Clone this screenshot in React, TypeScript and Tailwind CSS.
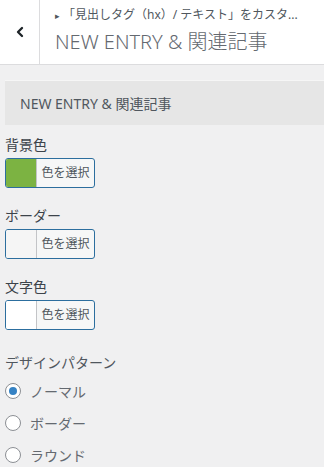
import { ChevronLeft } from 'lucide-react';

const font = { fontFamily: '"Noto Sans", "Noto Sans CJK JP", sans-serif' };

function ColorPicker({ label, swatch }: { label: string; swatch: string }) {
  return (
    <div className="flex flex-col">
      <div className="h-5 text-[14px] leading-5 text-[#3c434a]">{label}</div>
      <button
        type="button"
        className="mt-[3px] flex h-[30px] w-[90px] overflow-hidden rounded-[3px] border border-[#2c6e9e] bg-[#f6f7f7]"
      >
        <span className={`h-full w-[31px] border-r border-[#c3c4c7] ${swatch}`} />
        <span className="flex flex-1 items-center justify-center text-[12px] text-[#50575e]">色を選択</span>
      </button>
    </div>
  );
}

function Radio({ label, checked }: { label: string; checked?: boolean }) {
  return (
    <label className="flex h-[32px] items-center gap-[9px]">
      <span className="flex h-4 w-4 items-center justify-center rounded-full border border-[#8c8f94] bg-white">
        {checked && <span className="h-2 w-2 rounded-full bg-[#3582c4]" />}
      </span>
      <span className="text-[14px] text-[#646970]">{label}</span>
    </label>
  );
}

export default function App() {
  return (
    <div className="h-[467px] w-[324px] overflow-hidden bg-[#f0f0f1]" style={font}>
      <div className="flex h-[65px] border-b border-[#dcdcde] bg-white">
        <div className="flex w-10 items-center justify-center border-r border-[#dcdcde]">
          <ChevronLeft size={16} strokeWidth={3.5} className="text-[#1d2327]" />
        </div>
        <div className="flex min-w-0 flex-1 flex-col pl-[15px] pr-1 pt-[5px]">
          <div className="whitespace-nowrap text-[12px] leading-5 text-[#50575e]">
            <span className="mr-[3px] text-[9px] align-middle">▸</span>「見出しタグ（hx）/ テキスト」をカスタ...
          </div>
          <div className="mt-[2px] truncate text-[20px] font-light leading-7 text-[#646970]">NEW ENTRY &amp; 関連記事</div>
        </div>
      </div>

      <div className="pl-[5px] pt-[15px]">
        <div className="flex h-[45px] items-center border-t border-[#f6f6f6] bg-[#e6e6e6] pl-[15px] text-[14px] text-[#50575e]">
          NEW ENTRY &amp; 関連記事
        </div>

        <div className="mt-[10px] flex flex-col gap-[18px]">
          <ColorPicker label="背景色" swatch="bg-[#7cb342]" />
          <ColorPicker label="ボーダー" swatch="bg-[#f5f5f5]" />
          <ColorPicker label="文字色" swatch="bg-white" />
        </div>

        <div className="mt-[23px] h-5 text-[14px] leading-5 text-[#50575e]">デザインパターン</div>
        <div className="mt-[2px] flex flex-col">
          <Radio label="ノーマル" checked />
          <Radio label="ボーダー" />
          <Radio label="ラウンド" />
        </div>
      </div>
    </div>
  );
}
